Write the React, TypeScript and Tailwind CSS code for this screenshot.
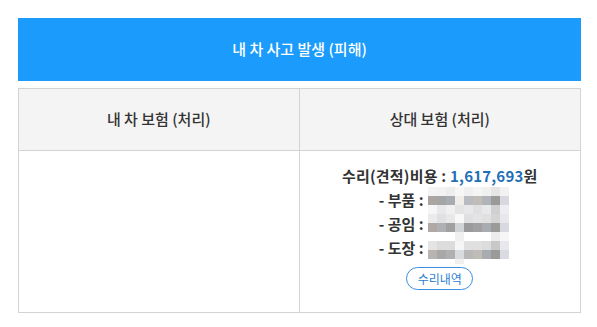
import React from "react";

const mosaic: string[][] = [
  ["#f4f4f4", "#f2f2f2", "#ededed", "#f7f7f7", "#f0f0f0", "#f5f5f5", "#f0f0f0", "#e5e5e5", "#f2f2f4"],
  ["#aaa5a0", "#a5a5a5", "#a8acb0", "#f0ede8", "#b8bcc0", "#c0bcb8", "#b0b4b8", "#9a9a98", "#d8d8e0"],
  ["#f6f6f6", "#e8e8ea", "#f0f0f2", "#e4e4e4", "#e8e8ea", "#e0e0e2", "#e8e8ea", "#d0d0d0", "#eeeef2"],
  ["#ebebeb", "#e0e0e2", "#e8e8e8", "#f8f8f8", "#e0e0e2", "#e4e4e4", "#e0e0e0", "#d4d4d4", "#e8e8ec"],
  ["#b0a8a4", "#b0b0b4", "#a0a0a0", "#d0d4d6", "#9a9a9c", "#a0a0a2", "#a8acb0", "#9a9a98", "#d8d8e0"],
  ["#ffffff", "#ffffff", "#ffffff", "#f0f0f0", "#ffffff", "#ffffff", "#ffffff", "#ececec", "#f6f6f6"],
  ["#e4e4e4", "#dcdcdc", "#dcdcdc", "#f6f6f6", "#e0e0e0", "#e0e0e0", "#dcdcdc", "#c8c8c8", "#e8e8ec"],
  ["#bab4b0", "#a8a8a8", "#b0b0b0", "#d8dcdf", "#b8b8b8", "#c0bcb8", "#a8acb0", "#9a9a98", "#dadae2"],
  ["#ffffff", "#ffffff", "#ffffff", "#f0f0f0", "#ffffff", "#ffffff", "#ffffff", "#ffffff", "#ffffff"],
];

function Mosaic() {
  return (
    <div className="flex flex-col -mt-[1px] ml-[4px]">
      {mosaic.map((row, i) => (
        <div key={i} className={i === 8 ? "flex h-[5px]" : "flex h-[9px]"}>
          {row.map((c, j) => (
            <div key={j} className="w-[9px] h-full" style={{ backgroundColor: c }} />
          ))}
        </div>
      ))}
    </div>
  );
}

export default function App() {
  return (
    <div
      className="w-[597px] h-[327px] bg-white pl-[18px] pr-[16px] pt-[18px]"
      style={{ fontFamily: '"Noto Sans CJK KR", "Noto Sans", sans-serif' }}
    >
      <div className="h-[63px] bg-[#1b9cfc] flex items-center justify-center text-white text-[15px] font-medium">
        내 차 사고 발생 (피해)
      </div>
      <div className="mt-[7px] border border-[#d3d3d3] grid grid-cols-2">
        <div className="h-[62px] bg-[#f4f4f4] flex items-center justify-center text-[15px] font-medium text-[#333] border-r border-[#d3d3d3] border-b">
          내 차 보험 (처리)
        </div>
        <div className="h-[62px] bg-[#f4f4f4] flex items-center justify-center text-[15px] font-medium text-[#333] border-b border-[#d3d3d3]">
          상대 보험 (처리)
        </div>
        <div className="h-[161px] border-r border-[#d3d3d3]" />
        <div className="h-[161px] flex flex-col items-center pt-[13px] text-[#333] font-bold text-[15px]">
          <div className="h-[24px] leading-[24px] tracking-[0.2px]">
            수리(견적)비용 : <span className="text-[#1f6fb6]">1,617,693</span>원
          </div>
          <div className="flex items-start pl-[8px]">
            <div className="flex flex-col items-end">
              <div className="h-[24px] leading-[24px]">- 부품 :</div>
              <div className="h-[24px] leading-[24px]">- 공임 :</div>
              <div className="h-[24px] leading-[24px]">- 도장 :</div>
            </div>
            <Mosaic />
          </div>
          <button className="mt-[3px] w-[67px] h-[23px] rounded-full border border-[#3a8ee0] text-[#2a7fd0] text-[12px] font-normal flex items-center justify-center leading-none">
            수리내역
          </button>
        </div>
      </div>
    </div>
  );
}
